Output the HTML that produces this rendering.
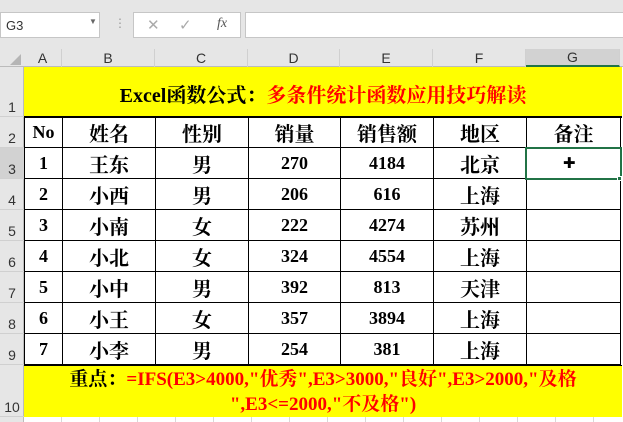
<!DOCTYPE html><html><head><meta charset="utf-8"><style>
body{margin:0;width:623px;height:422px;background:#fff;position:relative;overflow:hidden;font-family:"Liberation Sans",sans-serif}
.a{position:absolute;box-sizing:border-box}
.s{font-family:"Liberation Serif","Noto Serif CJK SC",serif;font-weight:bold;font-size:18px;color:#000;display:flex;align-items:center;justify-content:center;white-space:nowrap}
.hd{color:#333;font-size:14px;display:flex;align-items:center;justify-content:center}
</style></head><body>
<div class="a" style="left:0;top:0;width:623px;height:49px;background:#e6e6e6"></div>
<div class="a" style="left:0;top:12px;width:100px;height:26px;background:#fff;border:1px solid #c6c6c6;font-size:13px;color:#333;padding:5px 0 0 5px">G3<span style="position:absolute;left:88px;top:4px;font-size:8px;color:#666">▼</span></div>
<div class="a" style="left:114px;top:16px;color:#999;font-size:12px">⋮</div>
<div class="a" style="left:133px;top:12px;width:108px;height:26px;background:#fff;border:1px solid #c6c6c6;color:#aaa;font-size:15px"><span style="position:absolute;left:13px;top:3px">✕</span><span style="position:absolute;left:45px;top:3px">✓</span><span style="position:absolute;left:83px;top:3px;color:#555;font-style:italic;font-family:'Liberation Serif';font-size:14px">fx</span></div>
<div class="a" style="left:245px;top:12px;width:380px;height:26px;background:#fff;border:1px solid #c6c6c6"></div>
<div class="a" style="left:0;top:49px;width:623px;height:18px;background:#e6e6e6;border-bottom:1px solid #bbb"></div>
<div class="a" style="left:0;top:67px;width:24px;height:355px;background:#e6e6e6;border-right:1px solid #bbb"></div>
<svg class="a" style="left:8px;top:54px" width="14" height="12"><polygon points="13,0 13,11 2,11" fill="#b5b5b5"/></svg>
<div id="g"></div>
<script>
var xs=[24,62,155,248,340,433,526,620],L="ABCDEFG",h="";
for(var i=0;i<7;i++){h+='<div class="a hd" style="left:'+xs[i]+'px;top:49px;width:'+(xs[i+1]-xs[i])+'px;height:18px;border-right:1px solid #d0d0d0;'+(i==6?'background:#d2d2d2;border-bottom:2px solid #217346;':'')+'">'+L[i]+'</div>';}
var ys=[67,117,148,179,210,241,272,303,334,365,417];
for(var r=0;r<10;r++){h+='<div class="a hd" style="left:0;top:'+ys[r]+'px;width:24px;height:'+(ys[r+1]-ys[r])+'px;align-items:flex-end;padding-bottom:1px;border-bottom:1px solid #d0d0d0;'+(r==2?'background:#d2d2d2;':'')+'">'+(r+1)+'</div>';}
h+='<div class="a" style="left:24px;top:417px;width:600px;height:5px;background:repeating-linear-gradient(90deg,transparent 0 37px,#d8d8d8 37px 38px)"></div>';
h+='<div class="a s" style="left:24px;top:67px;width:598px;height:51px;background:#ff0;border-bottom:2px solid #000;font-size:20px;padding-top:4px">Excel函数公式：<span style="color:#f00">多条件统计函数应用技巧解读</span></div>';
var d=[["No","姓名","性别","销量","销售额","地区","备注"],["1","王东","男","270","4184","北京",""],["2","小西","男","206","616","上海",""],["3","小南","女","222","4274","苏州",""],["4","小北","女","324","4554","上海",""],["5","小中","男","392","813","天津",""],["6","小王","女","357","3894","上海",""],["7","小李","男","254","381","上海",""]];
for(var r=0;r<8;r++)for(var c=0;c<7;c++){var w=d[r][c];var f=(r==0&&c>0)||(r>0&&(c==1||c==2||c==5))?'font-size:20px;':'';h+='<div class="a s" style="left:'+xs[c]+'px;top:'+(ys[r+1]-1)+'px;width:'+(xs[c+1]-xs[c]+1)+'px;height:'+(ys[r+2]-ys[r+1]+1)+'px;border:1px solid #000;'+f+'">'+w+'</div>';}
h+='<div class="a s" style="left:24px;top:365px;width:598px;height:52px;background:#ff0;border-top:1px solid #000;flex-direction:column;line-height:25px;color:#f00;font-size:19px"><div><span style="color:#000">重点：</span>=IFS(E3&gt;4000,"优秀",E3&gt;3000,"良好",E3&gt;2000,"及格</div><div>",E3&lt;=2000,"不及格")</div></div>';
h+='<div class="a" style="left:525px;top:147px;width:97px;height:33px;border:2px solid #217346"></div><div class="a" style="left:617px;top:176px;width:5px;height:5px;background:#217346;border:1px solid #fff"></div>';
h+='<div class="a" style="left:563px;top:154px;font-size:15px;color:#000">✚</div>';
document.getElementById("g").innerHTML=h;
</script>
</body></html>
